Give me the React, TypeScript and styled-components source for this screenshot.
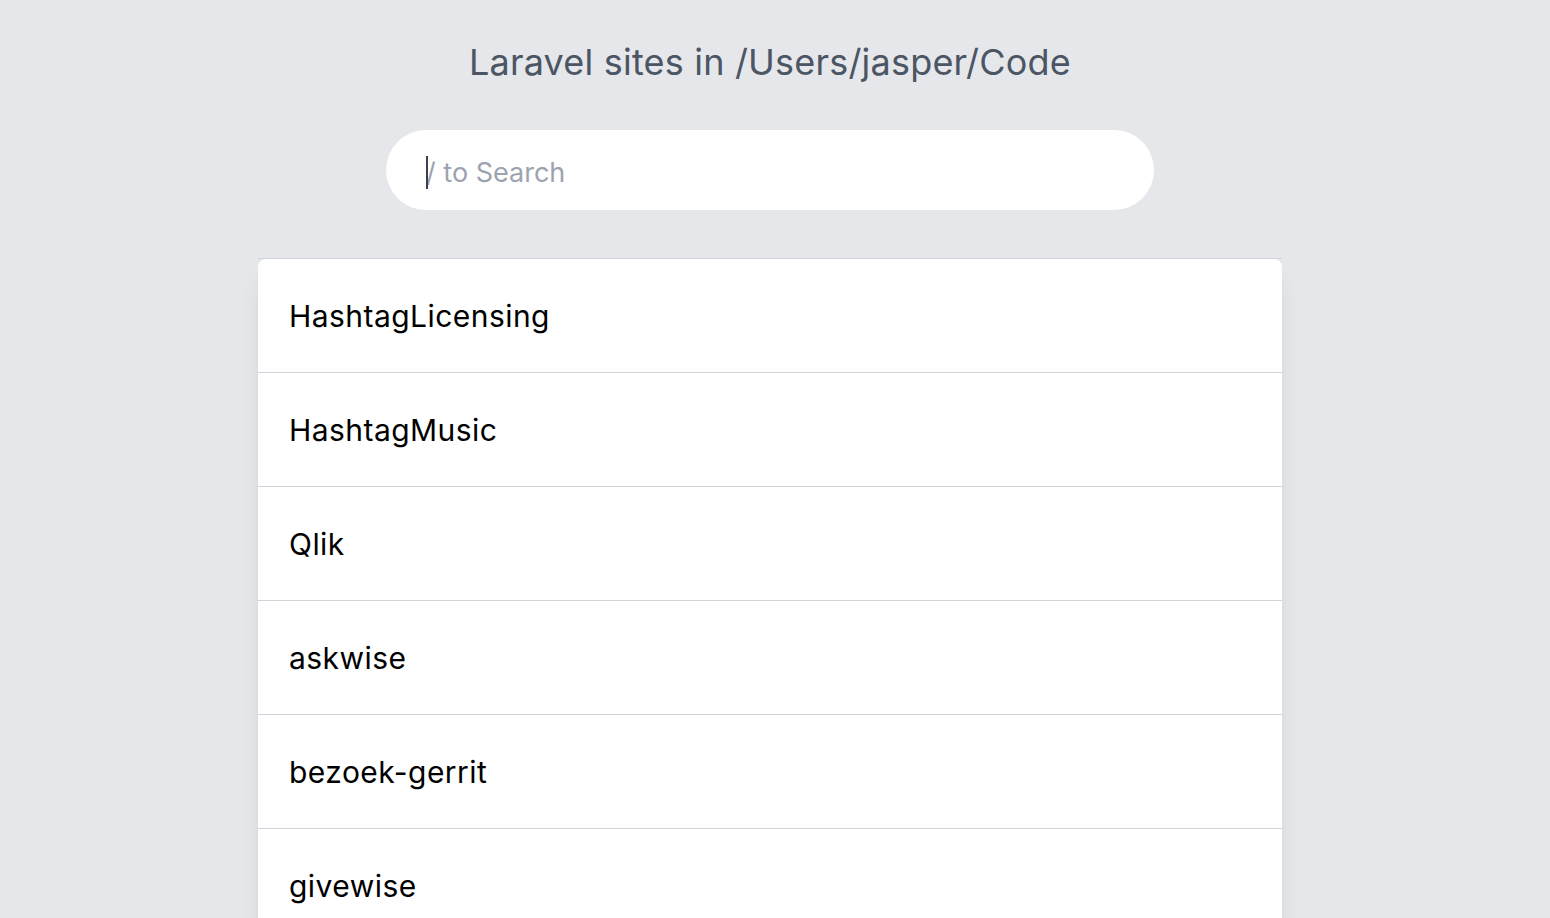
import {FC} from "react";
import styled, {createGlobalStyle} from "styled-components";

const GlobalStyle = createGlobalStyle`
	html,
	body {
		margin: 0;
		padding: 0;
		background: #e5e7eb;
		font-family: Inter, "Liberation Sans", Arial, sans-serif;
	}
`;

const Page = styled.div`
	height: 918px;
	display: flex;
	flex-direction: column;
	align-items: center;
	padding: 38px 10px 0 0;
	box-sizing: border-box;
	overflow: hidden;
`;

const Title = styled.h1`
	margin: 0;
	flex-shrink: 0;
	font-size: 36px;
	line-height: 48px;
	font-weight: 400;
	color: #4b5563;
	letter-spacing: 0.2px;
`;

const SearchBox = styled.div`
	position: relative;
	margin-top: 44px;
	flex-shrink: 0;
	width: 768px;
	height: 80px;
`;

const SearchInput = styled.input`
	width: 100%;
	height: 100%;
	box-sizing: border-box;
	border: none;
	outline: none;
	border-radius: 40px;
	background: #fff;
	padding: 4px 40px 0;
	font-family: inherit;
	font-size: 27px;
	color: #374151;
	caret-color: transparent;

	&::placeholder {
		color: #9ca3af;
	}
`;

// drawn caret, the focused input shows one in the screenshot
const Caret = styled.span`
	position: absolute;
	left: 40px;
	top: 26px;
	width: 2px;
	height: 33px;
	background: #374151;
	pointer-events: none;
`;

const ListWrap = styled.div`
	margin-top: 48px;
	flex-shrink: 0;
	width: 1024px;
	border-top: 1px solid #d1d5db;
`;

const List = styled.ul`
	margin: 0;
	padding: 0;
	list-style: none;
	background: #fff;
	border-radius: 8px 8px 0 0;
	box-shadow: 0 20px 25px -5px rgba(0, 0, 0, 0.1), 0 8px 10px -6px rgba(0, 0, 0, 0.1);
`;

const Row = styled.li`
	height: 114px;
	box-sizing: border-box;
	display: flex;
	align-items: center;
	padding: 0 31px;
	font-size: 30px;
	letter-spacing: 0.45px;
	color: #000;
	border-top: 1px solid #d1d5db;

	&:first-child {
		border-top: none;
		height: 113px;
	}
`;

const sites = [
	"HashtagLicensing",
	"HashtagMusic",
	"Qlik",
	"askwise",
	"bezoek-gerrit",
	"givewise",
];

const App: FC = () => {
	return (
		<>
			<GlobalStyle />
			<Page>
				<Title>Laravel sites in /Users/jasper/Code</Title>
				<SearchBox>
					<SearchInput autoFocus placeholder="/ to Search" />
					<Caret />
				</SearchBox>
				<ListWrap>
					<List>
						{sites.map((site) => (
							<Row key={site}>{site}</Row>
						))}
					</List>
				</ListWrap>
			</Page>
		</>
	);
};

export default App;
